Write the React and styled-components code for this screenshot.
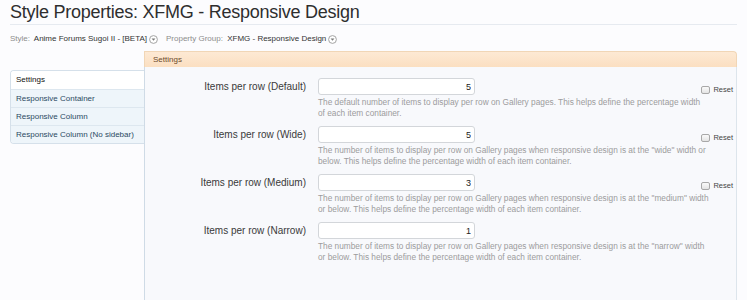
import React from "react";
import styled, { createGlobalStyle } from "styled-components";

const GlobalStyle = createGlobalStyle`
  body {
    margin: 0;
    background: #fcfcfe;
    font-family: "Liberation Sans", Arial, sans-serif;
    color: #333;
  }
`;

const rows = [
  {
    label: "Items per row (Default)",
    value: "5",
    reset: true,
    desc: [
      "The default number of items to display per row on Gallery pages. This helps define the percentage width",
      "of each item container.",
    ],
  },
  {
    label: "Items per row (Wide)",
    value: "5",
    reset: true,
    desc: [
      'The number of items to display per row on Gallery pages when responsive design is at the "wide" width or',
      "below. This helps define the percentage width of each item container.",
    ],
  },
  {
    label: "Items per row (Medium)",
    value: "3",
    reset: true,
    desc: [
      'The number of items to display per row on Gallery pages when responsive design is at the "medium" width',
      "or below. This helps define the percentage width of each item container.",
    ],
  },
  {
    label: "Items per row (Narrow)",
    value: "1",
    reset: false,
    desc: [
      'The number of items to display per row on Gallery pages when responsive design is at the "narrow" width',
      "or below. This helps define the percentage width of each item container.",
    ],
  },
];

const navItems = [
  "Settings",
  "Responsive Container",
  "Responsive Column",
  "Responsive Column (No sidebar)",
];

const DropIcon = () => (
  <svg width="9" height="9" viewBox="0 0 9 9">
    <circle cx="4.5" cy="4.5" r="3.9" fill="#fff" stroke="#9a9a9a" strokeWidth="0.9" />
    <path d="M2.6 3.6 L6.4 3.6 L4.5 5.8 Z" fill="#7a7a7a" />
  </svg>
);

const App = () => {
  return (
    <Page>
      <GlobalStyle />
      <Title>Style Properties: XFMG - Responsive Design</Title>
      <Meta>
        <MetaItem>
          <MetaLabel>Style:</MetaLabel> Anime Forums Sugoi II - [BETA]
          <DropIcon />
        </MetaItem>
        <MetaItem>
          <MetaLabel>Property Group:</MetaLabel> XFMG - Responsive Design
          <DropIcon />
        </MetaItem>
      </Meta>
      <Layout>
        <Nav>
          {navItems.map((item, i) => (
            <NavItem key={item} active={i === 0}>
              {item}
            </NavItem>
          ))}
        </Nav>
        <Main>
          <TabHeader>Settings</TabHeader>
          <Panel>
            {rows.map(row => (
              <Row key={row.label}>
                <Label>{row.label}</Label>
                <Control>
                  <InputLine>
                    <Input type="text" defaultValue={row.value} />
                    {row.reset ? (
                      <Reset>
                        <Check type="checkbox" />
                        Reset
                      </Reset>
                    ) : null}
                  </InputLine>
                  <Desc>
                    {row.desc.map(line => (
                      <DescLine key={line}>{line}</DescLine>
                    ))}
                  </Desc>
                </Control>
              </Row>
            ))}
          </Panel>
        </Main>
      </Layout>
    </Page>
  );
};

export default App;

const Page = styled.div`
  padding: 0 10px;
  height: 300px;
  overflow: hidden;
`;

const Title = styled.h1`
  margin: 0;
  padding-top: 1px;
  font-family: "Liberation Sans", Arial, sans-serif;
  font-weight: normal;
  font-size: 18px;
  letter-spacing: -0.25px;
  line-height: 22px;
  color: #2e2e2e;
  border-bottom: 1px solid #e6eaf0;
  padding-bottom: 1px;
`;

const Meta = styled.div`
  display: flex;
  gap: 8px;
  margin-top: 8px;
  font-size: 8px;
  line-height: 12px;
  color: #333;
`;

const MetaItem = styled.span`
  display: inline-flex;
  align-items: center;
  gap: 2px;
  white-space: pre;
`;

const MetaLabel = styled.span`
  color: #8c8c8c;
`;

const Layout = styled.div`
  display: grid;
  grid-template-columns: 134px 593px;
  margin-top: 6px;
`;

const Nav = styled.div`
  margin-top: 19px;
  align-self: start;
  border: 1px solid #d5e0ea;
  border-right: none;
  border-radius: 4px 0 0 4px;
  overflow: hidden;
`;

const NavItem = styled.div`
  height: 18px;
  line-height: 18px;
  padding-left: 5px;
  font-size: 8px;
  white-space: nowrap;
  color: ${p => (p.active ? "#111" : "#2b4a62")};
  background: ${p => (p.active ? "#fff" : "#eef5fa")};
  border-top: ${p => (p.active ? "none" : "1px solid #dde7ef")};
  box-sizing: border-box;
`;

const Main = styled.div`
  display: flex;
  flex-direction: column;
`;

const TabHeader = styled.div`
  height: 16px;
  line-height: 16px;
  padding-left: 8px;
  font-size: 8px;
  color: #6b4a2b;
  background: linear-gradient(#fde9d4, #fbdfc1);
  border: 1px solid #f1d6b6;
  border-bottom: none;
  border-radius: 0 4px 0 0;
  box-sizing: border-box;
`;

const Panel = styled.div`
  flex: 1;
  min-height: 260px;
  padding: 11px 0 0;
  background: #f8f9fc;
  border-left: 1px solid #cfdbe6;
  border-right: 1px solid #dde5ec;
`;

const Row = styled.div`
  display: grid;
  grid-template-columns: 161px 1fr;
  column-gap: 12px;
  margin-bottom: 7px;
`;

const Label = styled.div`
  text-align: right;
  font-size: 10px;
  line-height: 17px;
  color: #3a3a3a;
  white-space: nowrap;
`;

const Control = styled.div`
  display: flex;
  flex-direction: column;
  padding-right: 3px;
`;

const InputLine = styled.div`
  display: flex;
  justify-content: space-between;
  align-items: flex-start;
`;

const Input = styled.input`
  width: 157px;
  height: 17px;
  box-sizing: border-box;
  padding: 0 3px;
  border: 1px solid #d3d6da;
  border-radius: 3px;
  background: #fff;
  text-align: right;
  font-family: "Liberation Sans", Arial, sans-serif;
  font-size: 9px;
  color: #222;
  outline: none;
`;

const Reset = styled.label`
  display: inline-flex;
  align-items: center;
  gap: 3px;
  margin-top: 7px;
  font-size: 7.5px;
  color: #444;
`;

const Check = styled.input`
  appearance: none;
  margin: 0;
  width: 9px;
  height: 8px;
  border: 1px solid #a8a8a8;
  border-radius: 2px;
  background: linear-gradient(#fafafa, #e4e4e4);
`;

const Desc = styled.div`
  margin-top: 2px;
  font-size: 8.3px;
  line-height: 11px;
  color: #9c9c9c;
`;

const DescLine = styled.div`
  white-space: nowrap;
`;
